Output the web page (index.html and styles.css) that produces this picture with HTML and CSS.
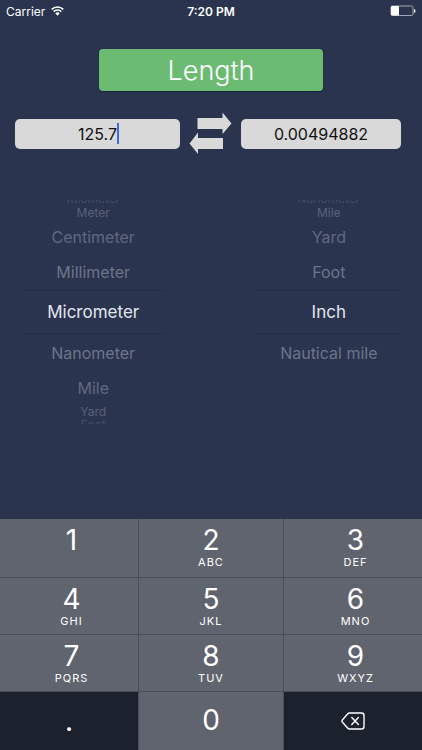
FILE: index.html
```html
<!DOCTYPE html>
<html lang="en">
<head>
<meta charset="utf-8">
<meta name="viewport" content="width=device-width, initial-scale=1">
<title>Length</title>
<link rel="stylesheet" href="styles.css">
</head>
<body>
<header class="status">
  <div class="carrier">
    <span>Carrier</span>
    <svg class="wifi" viewBox="0 0 13 10" aria-hidden="true">
      <path d="M.7 3.400a8.200 8.200 0 0 1 11.600 0M2.700 5.600a5.400 5.400 0 0 1 7.600 0" fill="none" stroke="#fff" stroke-width="1.600"/>
      <path d="M4.300 7.300a3.100 3.100 0 0 1 4.400 0L6.500 9.700z" fill="#fff"/>
    </svg>
  </div>
  <time class="clock">7:20 PM</time>
  <svg class="battery" viewBox="0 0 26 12" aria-hidden="true">
    <rect x="1" y="1" width="22" height="9.500" rx="1.500" fill="none" stroke="#a3a8b4" stroke-width="1"/>
    <rect x="1" y="1" width="8" height="9.500" rx="1" fill="#fff"/>
    <path d="M24 4v4q1.500-.5 1.500-2T24 4z" fill="#fff"/>
  </svg>
</header>
<main class="converter">
  <button class="category" type="button">Length</button>
  <div class="values">
    <div class="field">
      <input class="value" type="text" inputmode="decimal" aria-label="From value" value="125.7">
      <span class="caret"></span>
    </div>
    <button class="swap" type="button" aria-label="Swap units">
      <svg class="swap-icon" viewBox="0 0 43 43" aria-hidden="true">
        <path d="M8.500 6H33.500V.5L42.500 11.500L33.500 22V17H8.500z"/>
        <path d="M34 26H9V20.500L.5 31.500L9 42V37H34z"/>
      </svg>
    </button>
    <input class="value" type="text" inputmode="decimal" aria-label="To value" value="0.00494882">
  </div>
  <div class="wheels">
    <div class="wheel" role="listbox" aria-label="From unit">
      <div class="unit edge top" role="option">Kilometer</div>
      <div class="unit far" role="option">Meter</div>
      <div class="unit mid" role="option">Centimeter</div>
      <div class="unit near" role="option">Millimeter</div>
      <div class="unit chosen" role="option" aria-selected="true">Micrometer</div>
      <div class="unit near" role="option">Nanometer</div>
      <div class="unit mid" role="option">Mile</div>
      <div class="unit far" role="option">Yard</div>
      <div class="unit edge" role="option">Foot</div>
    </div>
    <div class="wheel" role="listbox" aria-label="To unit">
      <div class="unit edge top" role="option">Nanometer</div>
      <div class="unit far" role="option">Mile</div>
      <div class="unit mid" role="option">Yard</div>
      <div class="unit near" role="option">Foot</div>
      <div class="unit chosen" role="option" aria-selected="true">Inch</div>
      <div class="unit near" role="option">Nautical mile</div>
    </div>
  </div>
</main>
<div class="keypad">
  <button class="key side" type="button">1</button>
  <button class="key" type="button">2<span class="letters">ABC</span></button>
  <button class="key side" type="button">3<span class="letters">DEF</span></button>
  <button class="key side" type="button">4<span class="letters">GHI</span></button>
  <button class="key" type="button">5<span class="letters">JKL</span></button>
  <button class="key side" type="button">6<span class="letters">MNO</span></button>
  <button class="key side" type="button">7<span class="letters">PQRS</span></button>
  <button class="key" type="button">8<span class="letters">TUV</span></button>
  <button class="key side" type="button">9<span class="letters">WXYZ</span></button>
  <button class="key dark" type="button">.</button>
  <button class="key zero" type="button">0</button>
  <button class="key dark" type="button" aria-label="Delete">
    <svg class="delete" viewBox="0 0 24 18" aria-hidden="true">
      <path d="M8.200 1H20.500Q23 1 23 3.500V14.500Q23 17 20.500 17H8.200Q7.400 17 6.800 16.300L1.300 10Q.6 9 1.300 8L6.800 1.700Q7.400 1 8.200 1zM10.800 5.600L17.400 12.400M17.400 5.600L10.800 12.400" fill="none" stroke="#fff" stroke-width="1.400" stroke-linecap="round" stroke-linejoin="round"/>
    </svg>
  </button>
</div>
</body>
</html>
```

FILE: styles.css
```css
* {
  box-sizing: border-box;
}

body {
  margin: 0;
  min-height: 100vh;
  display: flex;
  flex-direction: column;
  background: #2a344f;
  color: #fff;
  font-family: Inter, "Liberation Sans", sans-serif;
}

button,
input {
  margin: 0;
  padding: 0;
  border: 0;
  font: inherit;
  color: inherit;
}

.status {
  display: grid;
  grid-template-columns: 1fr auto 1fr;
  align-items: center;
  height: 22px;
  padding: 0 6px;
  font-size: 12px;
}

.carrier {
  display: flex;
  align-items: center;
  gap: 6px;
}

.wifi {
  width: 13px;
  height: 10px;
}

.clock {
  font-weight: 600;
}

.battery {
  width: 26px;
  height: 12px;
  justify-self: end;
}

.converter {
  display: flex;
  flex-direction: column;
  padding-top: 27px;
}

.category {
  align-self: center;
  width: 53%;
  height: 42px;
  border-radius: 4px;
  background: #6bbb73;
  box-shadow: 0 1px 2px #17263a;
  font-size: 27px;
  font-weight: 300;
}

.values {
  display: grid;
  grid-template-columns: 165fr 61px 160fr;
  align-items: center;
  margin-top: 21px;
  padding: 0 21px 0 15px;
}

.field {
  position: relative;
}

.value {
  display: block;
  width: 100%;
  height: 30px;
  border-radius: 5px;
  background: #d9d9d9;
  color: #111;
  font-size: 16px;
  text-align: center;
}

.caret {
  position: absolute;
  top: 4px;
  left: calc(50% + 19px);
  width: 2px;
  height: 21px;
  background: #4568e0;
}

.swap {
  justify-self: center;
  display: flex;
  background: none;
}

.swap-icon {
  width: 43px;
  height: 43px;
  fill: #d9d9d9;
}

.wheels {
  display: flex;
  justify-content: space-between;
  margin-top: 45px;
  padding: 0 21px;
}

.wheel {
  width: 38%;
}

.unit {
  display: flex;
  align-items: center;
  justify-content: center;
  overflow: hidden;
  white-space: nowrap;
  font-size: 16px;
  color: #6c7488;
}

.chosen {
  height: 44px;
  border-top: 1px solid #232c45;
  border-bottom: 1px solid #232c45;
  font-size: 17px;
  color: #e3e6ee;
}

.near {
  height: 37px;
}

.mid {
  height: 33px;
  color: #606980;
}

.far {
  height: 15px;
  font-size: 12px;
  color: #596279;
}

.edge {
  height: 5px;
  align-items: flex-start;
  font-size: 12px;
  line-height: 12px;
  color: #424c66;
}

.edge.top {
  align-items: flex-end;
}

.keypad {
  display: grid;
  grid-template-columns: 138fr 144fr 138fr;
  grid-template-rows: 58px 56px 56px 58px;
  gap: 1px;
  margin-top: auto;
  background: #4a4e5b;
}

.key {
  display: flex;
  flex-direction: column;
  align-items: center;
  padding-top: 6px;
  background: #60646e;
  font-size: 28px;
  line-height: 31px;
}

.side {
  padding-left: 5px;
}

.letters {
  font-size: 11px;
  line-height: 12px;
  letter-spacing: 1px;
}

.zero {
  padding-top: 13px;
}

.dark {
  padding-top: 0;
  justify-content: center;
  background: #1b212d;
}

.delete {
  width: 24px;
  height: 18px;
}
```
